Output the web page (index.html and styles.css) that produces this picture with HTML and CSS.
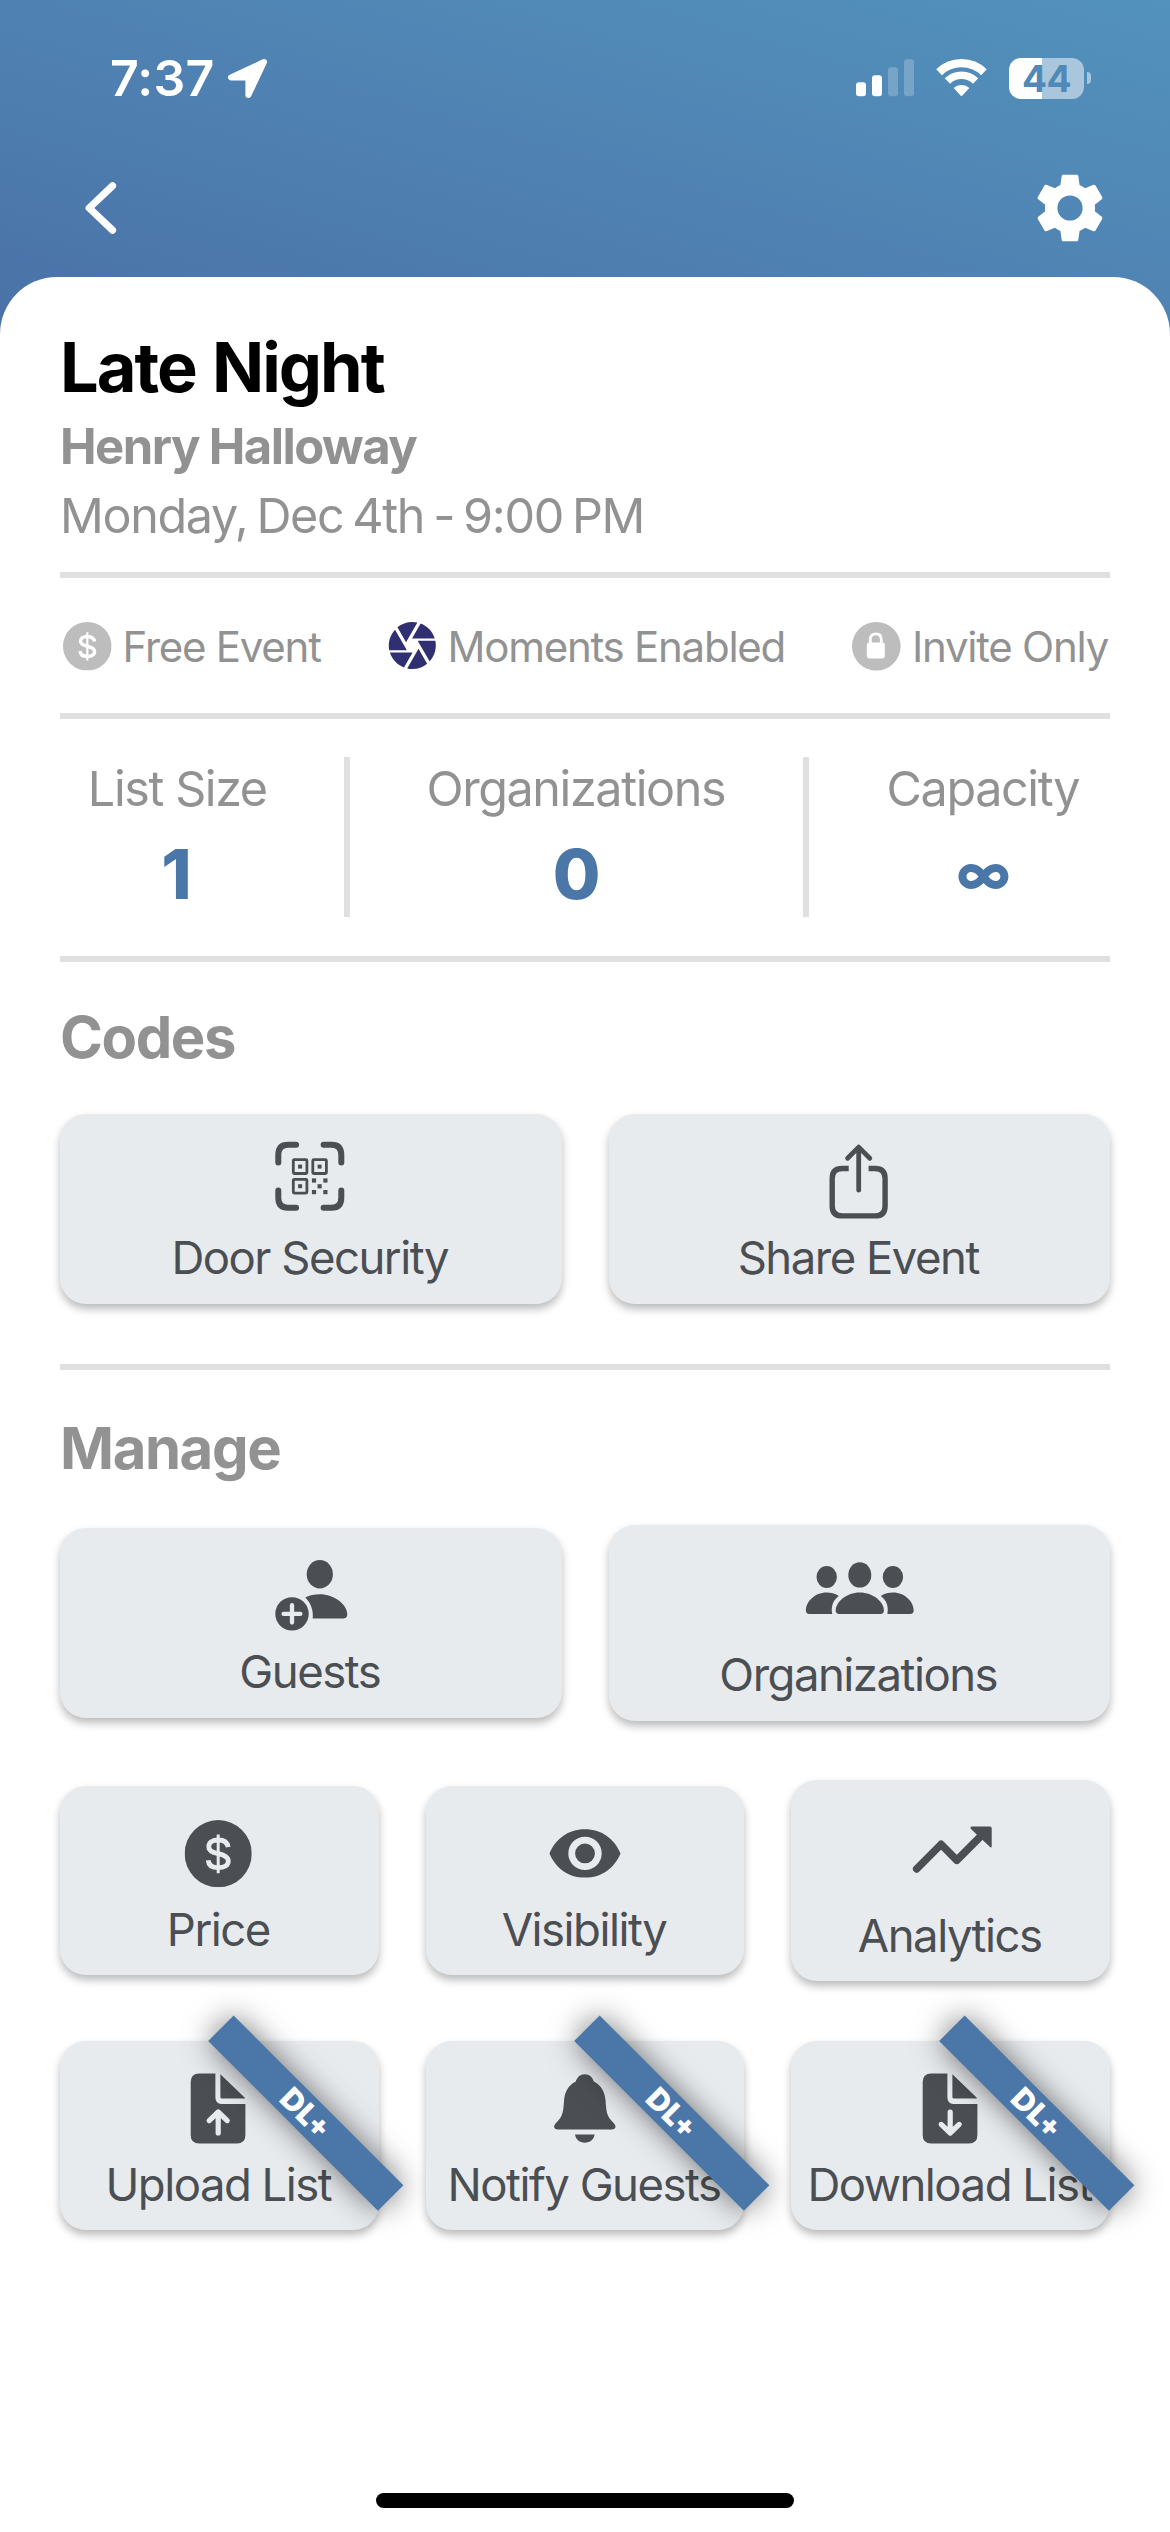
FILE: index.html
```html
<!DOCTYPE html>
<html lang="en">
<head>
<meta charset="utf-8">
<title>Late Night</title>
<link rel="stylesheet" href="styles.css">
</head>
<body>
<svg class="defs" width="0" height="0" aria-hidden="true">
  <symbol id="dollar" viewBox="20.6 16.1 67.2 67.2">
    <circle cx="54.2" cy="49.7" r="33.6" fill="currentColor"/>
    <path class="cut" stroke-width="4.8" d="M64.2 43.2C63.5 38.6 60 36 54.2 36C48.5 36 44.8 38.6 44.8 42.5C44.8 46.8 48.2 48.2 54.2 49.6C60.8 51.1 64.3 52.8 64.3 56.9C64.3 61.3 60.2 63.7 54.2 63.7C48.2 63.7 44.6 61 44.2 56.2"/>
    <path class="cut" stroke-width="3" d="M54.2 30.4V69.2"/>
  </symbol>
  <symbol id="page" viewBox="0 0 110 99">
    <path fill="currentColor" d="M51.4 14.5V38.3Q51.4 44.9 57.4 44.9H81.4V76Q81.4 84.5 72.9 84.5H35.2Q26.7 84.5 26.7 76V23Q26.7 14.5 35.2 14.5Z"/>
    <path fill="currentColor" d="M56.4 15.2L80.6 38.4Q81.6 39.6 80 39.6H58Q56.4 39.6 56.4 38Z"/>
  </symbol>
</svg>

<div class="screen">
  <header class="top">
    <div class="status">
      <div class="clock">
        <span>7:37</span>
        <svg width="39" height="39" viewBox="227 59 39 39"><path fill="#fff" stroke="#fff" stroke-width="6" stroke-linejoin="round" d="M263 62L230 77.5H247.4V95Z"/></svg>
      </div>
      <div class="indicators">
        <svg width="58" height="38" viewBox="0 0 58 38" fill="#fff">
          <rect x="0" y="23.3" width="10" height="14" rx="3"/>
          <rect x="16" y="16.3" width="10" height="21" rx="3"/>
          <rect x="32" y="8.3" width="10" height="29" rx="3" opacity=".22"/>
          <rect x="48" y="0.3" width="10" height="37" rx="3" opacity=".22"/>
        </svg>
        <svg width="51" height="38" viewBox="936 59 51 38" fill="none" stroke="#fff">
          <path stroke-width="8.2" d="M939.1 72.2A32.3 32.3 0 0 1 983.9 72.2"/>
          <path stroke-width="7.6" d="M947.4 81A20.2 20.2 0 0 1 975.6 81"/>
          <path fill="#fff" stroke="none" d="M953.7 88.1A11.2 11.2 0 0 1 969.3 88.1L962.7 95.2Q961.5 96.6 960.3 95.2Z"/>
        </svg>
        <div class="battery"><span class="level">44</span><span class="nub"></span></div>
      </div>
    </div>
    <nav class="bar">
      <svg width="32" height="52" viewBox="0 0 32 52"><path fill="none" stroke="#fff" stroke-width="7.2" stroke-linecap="round" stroke-linejoin="round" d="M27.5 3.8L4.2 26L27.5 48.2"/></svg>
      <svg width="80" height="80" viewBox="0 0 24 24"><path fill="#fff" d="M19.43 12.98c.04-.32.07-.64.07-.98s-.03-.66-.07-.98l2.11-1.65c.19-.15.24-.42.12-.64l-2-3.46c-.12-.22-.39-.3-.61-.22l-2.49 1c-.52-.4-1.08-.73-1.69-.98l-.38-2.65C14.46 2.18 14.25 2 14 2h-4c-.25 0-.46.18-.49.42l-.38 2.65c-.61.25-1.17.59-1.69.98l-2.49-1c-.23-.09-.49 0-.61.22l-2 3.46c-.13.22-.07.49.12.64l2.11 1.65c-.04.32-.07.65-.07.98s.03.66.07.98l-2.11 1.65c-.19.15-.24.42-.12.64l2 3.46c.12.22.39.3.61.22l2.49-1c.52.4 1.08.73 1.69.98l.38 2.65c.03.24.24.42.49.42h4c.25 0 .46-.18.49-.42l.38-2.65c.61-.25 1.17-.59 1.69-.98l2.49 1c.23.09.49 0 .61-.22l2-3.46c.12-.22.07-.49-.12-.64l-2.11-1.65zM12 15.78a3.78 3.78 0 1 1 0-7.56 3.78 3.78 0 0 1 0 7.56z"/></svg>
    </nav>
  </header>

  <main class="sheet">
    <h1 class="title">Late Night</h1>
    <p class="host">Henry Halloway</p>
    <p class="date">Monday, Dec 4th - 9:00 PM</p>
    <hr class="rule">

    <ul class="facts">
      <li class="fact">
        <svg class="fact-icon on-white" width="48.6" height="48.6"><use href="#dollar"/></svg>
        <span>Free Event</span>
      </li>
      <li class="fact">
        <svg class="fact-icon moments" width="48.6" height="48.6" viewBox="1.66 2 20.68 20.68" fill="currentColor"><path d="M9.4 10.5l4.77-8.26C13.47 2.09 12.75 2 12 2c-2.4 0-4.6.85-6.32 2.25l3.66 6.35.06-.1zM21.54 9c-.92-2.92-3.15-5.26-6-6.34L11.88 9h9.66zm.26 1h-7.49l.29.5 4.76 8.25C21 16.97 22 14.61 22 12c0-.69-.07-1.35-.2-2zM8.54 12l-3.9-6.75C3.01 7.03 2 9.39 2 12c0 .69.07 1.35.2 2h7.49l-1.15-2zm-6.08 3c.92 2.92 3.15 5.26 6 6.34L12.12 15H2.46zm11.27 0l-3.9 6.76c.7.15 1.42.24 2.17.24 2.4 0 4.6-.85 6.32-2.25l-3.66-6.35-.93 1.6z"/></svg>
        <span>Moments Enabled</span>
      </li>
      <li class="fact">
        <svg class="fact-icon" width="48.6" height="48.6" viewBox="0 0 48.6 48.6">
          <circle cx="24.3" cy="24.3" r="24.3" fill="currentColor"/>
          <path fill="none" stroke="#fff" stroke-width="2.8" d="M18.3 22V17.6C18.3 13.8 20.6 11.9 23.8 11.9S29.3 13.8 29.3 17.6V22"/>
          <rect x="14.8" y="20.6" width="18" height="15.9" rx="2.4" fill="#fff"/>
        </svg>
        <span>Invite Only</span>
      </li>
    </ul>
    <hr class="rule">

    <dl class="stats">
      <div class="stat stat-list"><dt>List Size</dt><dd class="one">1</dd></div>
      <div class="divider"></div>
      <div class="stat stat-orgs"><dt>Organizations</dt><dd>0</dd></div>
      <div class="divider"></div>
      <div class="stat stat-cap"><dt>Capacity</dt><dd class="infinite">∞</dd></div>
    </dl>
    <hr class="rule">

    <h2 class="heading codes">Codes</h2>
    <div class="row">
      <button class="tile">
        <svg width="110" height="99" viewBox="0 0 110 99" fill="none" stroke="currentColor">
          <path stroke-width="6" stroke-linecap="round" d="M22.3 30.5V23Q22.3 12.8 32 12.8H40.1M67.6 12.8H75.6Q85.3 12.8 85.3 23V30.5M22.3 58.5V65.8Q22.3 75.8 32 75.8H40.1M67.6 75.8H75.6Q85.3 75.8 85.3 65.8V58.5"/>
          <g stroke-width="2.8">
            <rect x="37.3" y="27.7" width="13.6" height="13.8" rx="1"/>
            <rect x="56.8" y="27.7" width="13.6" height="13.8" rx="1"/>
            <rect x="37.3" y="47.3" width="13.6" height="13.8" rx="1"/>
          </g>
          <g fill="currentColor" stroke="none">
            <rect x="42.1" y="32.6" width="4" height="4"/><rect x="61.6" y="32.6" width="4" height="4"/><rect x="42.1" y="52.2" width="4" height="4"/>
            <rect x="55.9" y="46.4" width="4.2" height="4.2"/><rect x="67.3" y="46.4" width="4.2" height="4.2"/><rect x="61.5" y="52.2" width="4.2" height="4.2"/><rect x="55.9" y="58" width="4.2" height="4.2"/><rect x="67.3" y="58" width="4.2" height="4.2"/>
          </g>
        </svg>
        <span>Door Security</span>
      </button>
      <button class="tile">
        <svg width="110" height="99" viewBox="0 0 110 99" fill="none" stroke="currentColor">
          <path stroke-width="5.4" d="M44.7 36.5H38.2Q28.2 36.5 28.2 46.5V73.9Q28.2 83.9 38.2 83.9H71.1Q81.1 83.9 81.1 73.9V46.5Q81.1 36.5 71.1 36.5H64.6"/>
          <path stroke-width="4.8" stroke-linecap="round" stroke-linejoin="round" d="M54.7 58.2V15.4M43.6 26.2L54.7 15.1L65.8 26.2"/>
        </svg>
        <span>Share Event</span>
      </button>
    </div>
    <hr class="rule manage-rule">

    <h2 class="heading manage">Manage</h2>
    <div class="rows">
      <div class="row">
        <button class="tile">
          <svg width="110" height="99" viewBox="0 0 110 99" fill="currentColor">
            <ellipse cx="63.8" cy="28.3" rx="13.1" ry="14.2"/>
            <path d="M49.3 51.4C53.5 49.2 58.5 48.2 63.8 48.2C78 48.2 91.3 58.5 91.3 68.3C91.3 71.2 89.7 72.6 87 72.6H56.7C57.6 64.5 55 57 49.3 51.4Z"/>
            <circle cx="36" cy="67.9" r="16.7"/>
            <path class="cut" stroke-width="4.3" stroke-linecap="round" d="M27.6 67.9H44.4M36 59.2V76.6"/>
          </svg>
          <span>Guests</span>
        </button>
        <button class="tile">
          <svg width="110" height="105" viewBox="0 0 110 105" fill="currentColor">
            <ellipse cx="22.7" cy="34" rx="10.2" ry="10.9"/>
            <ellipse cx="55.8" cy="31.9" rx="11.5" ry="12.7"/>
            <ellipse cx="88.9" cy="34" rx="10.2" ry="10.9"/>
            <path d="M31.7 67.5C31.7 59 42.5 49.5 55.8 49.5S79.9 59 79.9 67.5Q79.9 70.9 76.5 70.9H35.1Q31.7 70.9 31.7 67.5Z"/>
            <path d="M34.8 52.9C30.8 50.4 27.2 49.5 22.5 49.5C11 49.5 1.9 58.5 1.9 67.5Q1.9 70.9 5.3 70.9H28.3C26.6 63.5 29.2 57 34.8 52.9Z"/>
            <path d="M76.8 52.9C80.8 50.4 84.4 49.5 89.1 49.5C100.6 49.5 109.7 58.5 109.7 67.5Q109.7 70.9 106.3 70.9H83.3C85 63.5 82.4 57 76.8 52.9Z"/>
          </svg>
          <span>Organizations</span>
        </button>
      </div>
      <div class="row">
        <button class="tile">
          <svg width="110" height="99" viewBox="0 0 110 99"><use href="#dollar" x="20.6" y="16.1" width="67.2" height="67.2"/></svg>
          <span>Price</span>
        </button>
        <button class="tile">
          <svg width="110" height="99" viewBox="0 0 110 99" fill="currentColor">
            <path fill-rule="evenodd" d="M19.5 49.4C25.5 35 38 25.2 55 25.2S84.5 35 90.5 49.4C84.5 63.8 72 73.6 55 73.6S25.5 63.8 19.5 49.4ZM71.7 49.4A16.7 16.7 0 1 0 38.3 49.4A16.7 16.7 0 1 0 71.7 49.4Z"/>
            <circle cx="55" cy="49.4" r="9.9"/>
          </svg>
          <span>Visibility</span>
        </button>
        <button class="tile">
          <svg width="110" height="111" viewBox="0 0 110 111">
            <path fill="none" stroke="currentColor" stroke-width="7.6" stroke-linecap="round" stroke-linejoin="round" d="M20.7 70.9L45.1 46.4L60.8 62.2L88 35"/>
            <path fill="currentColor" d="M76 28.5H94Q95.7 28.5 95.7 30.2V48Q95.7 50.6 93.8 48.8L75.2 31.2Q73.4 28.8 76 28.5Z"/>
          </svg>
          <span>Analytics</span>
        </button>
      </div>
      <div class="row">
        <button class="tile">
          <svg width="110" height="99" viewBox="0 0 110 99">
            <use href="#page"/>
            <path class="cut" stroke-width="5.2" stroke-linecap="round" stroke-linejoin="round" d="M54.2 73.9V54M45.2 61.6L54.2 53L63.2 61.6"/>
          </svg>
          <span>Upload List</span>
          <b class="ribbon">DL+</b>
        </button>
        <button class="tile">
          <svg width="110" height="99" viewBox="0 0 110 99" fill="currentColor">
            <path d="M54.8 15.2C59.5 15.2 62.6 18.4 63.8 22.6C71.5 26.3 75 33.5 75.6 42C76.2 52 77 56.5 80.5 60.5C83.8 64.2 85.5 65.7 85.5 67.6Q85.5 70.6 81.5 70.6H28.1Q24.1 70.6 24.1 67.6C24.1 65.7 25.8 64.2 29.1 60.5C32.6 56.5 33.4 52 34 42C34.6 33.5 38.1 26.3 45.8 22.6C47 18.4 50.1 15.2 54.8 15.2Z"/>
            <path d="M45 75.5H64.6C63.9 80.5 60 83.7 54.8 83.7S45.7 80.5 45 75.5Z"/>
          </svg>
          <span>Notify Guests</span>
          <b class="ribbon">DL+</b>
        </button>
        <button class="tile">
          <svg width="110" height="99" viewBox="0 0 110 99">
            <use href="#page"/>
            <path class="cut" stroke-width="5.2" stroke-linecap="round" stroke-linejoin="round" d="M54.2 53.2V73M45.2 65.4L54.2 74L63.2 65.4"/>
          </svg>
          <span>Download List</span>
          <b class="ribbon">DL+</b>
        </button>
      </div>
    </div>
    <div class="home"></div>
  </main>
</div>
</body>
</html>
```
FILE: styles.css
```css
* { box-sizing: border-box; margin: 0; padding: 0; }

body {
  --cut: #e8ebee;
  font-family: Inter, "Liberation Sans", sans-serif;
  color: #929292;
  background: #fff;
}

svg { display: block; flex: none; overflow: visible; }
.defs { position: absolute; }

.screen {
  width: 1170px;
  height: 2532px;
  display: flex;
  flex-direction: column;
  overflow: hidden;
  background: #fff linear-gradient(to top right, #4a71a7, #4f82b2 50%, #5392bd) no-repeat 0 0 / 100% 336px;
}

/* header */
.top { height: 277px; }
.status {
  height: 156px;
  padding: 0 79px 0 110px;
  display: flex;
  justify-content: space-between;
  align-items: center;
}
.clock {
  display: flex;
  align-items: center;
  gap: 13px;
  color: #fff;
  font-size: 50px;
  font-weight: 560;
  letter-spacing: .2px;
}
.indicators { display: flex; align-items: center; gap: 22px; }
.battery { display: flex; align-items: center; gap: 3px; }
.level {
  width: 75px;
  height: 41px;
  border-radius: 12px;
  background: linear-gradient(to right, #fff 33px, rgba(255, 255, 255, .5) 33px);
  color: #5088b7;
  font-size: 37px;
  font-weight: 700;
  line-height: 41px;
  text-align: center;
  letter-spacing: -.4px;
}
.nub { width: 4px; height: 12px; border-radius: 0 4px 4px 0; background: rgba(255, 255, 255, .5); }
.bar {
  height: 104px;
  padding: 0 60px 0 85px;
  display: flex;
  justify-content: space-between;
  align-items: center;
}

/* sheet */
.sheet {
  flex: 1;
  padding: 57px 60px 24px;
  border-radius: 57px 57px 0 0;
  background: #fff;
  display: flex;
  flex-direction: column;
}
.title {
  color: #000;
  font-size: 68.5px;
  line-height: 68px;
  font-weight: 740;
  letter-spacing: -2px;
  word-spacing: 2px;
}
.host {
  margin-top: 17px;
  font-size: 49px;
  line-height: 56px;
  font-weight: 670;
  letter-spacing: -1.5px;
  word-spacing: -.5px;
}
.date {
  margin-top: 13px;
  font-size: 48.5px;
  line-height: 56px;
  font-weight: 420;
  letter-spacing: -1.35px;
  word-spacing: -3.3px;
}
.rule { flex: none; height: 6px; border: 0; background: #e0e0e0; }
.date + .rule { margin-top: 28px; }

.facts {
  height: 135px;
  padding: 2px 2px 0 3px;
  display: flex;
  justify-content: space-between;
  align-items: center;
  list-style: none;
}
.fact {
  display: flex;
  align-items: center;
  gap: 11px;
  font-size: 42px;
  line-height: 50px;
  font-weight: 430;
  letter-spacing: -1.25px;
}
.fact-icon { color: #bdbdbd; }
.moments { color: #2f2f72; }

.stats {
  height: 237px;
  padding: 38px 0 39px;
  display: flex;
  justify-content: space-between;
}
.stat { display: flex; flex-direction: column; align-items: center; gap: 15px; padding-top: 2px; }
.stat-list { width: 236px; }
.stat-orgs { width: 357px; }
.stat-cap { width: 253px; }
.stat dt {
  font-size: 48.5px;
  line-height: 60px;
  font-weight: 430;
  letter-spacing: -1.4px;
  text-indent: -1.4px;
}
.stat dd { color: #4a76a8; font-size: 69px; line-height: 80px; font-weight: 800; }
.stat .one { text-indent: -3px; }
.stat .infinite { font-size: 54px; }
.divider { width: 6px; background: #e0e0e0; }

.heading { font-size: 58px; line-height: 64px; font-weight: 710; letter-spacing: -1.4px; }
.codes { margin: 43px 0 45px; }
.manage-rule { margin-top: 60.5px; }
.manage { margin: 46px 0 45px; }

/* tiles */
.rows { display: flex; flex-direction: column; gap: 59.3px; }
.row { display: flex; align-items: center; gap: 47px; }
.tile {
  position: relative;
  flex: 1 1 0;
  min-width: 0;
  padding: 18px 0 18.5px;
  display: flex;
  flex-direction: column;
  align-items: center;
  border: 0;
  border-radius: 26px;
  background: #e8ebee;
  box-shadow: 0 5px 9px rgba(0, 0, 0, .27);
  color: #4b4f53;
  font-family: inherit;
  font-size: 45.5px;
  font-weight: 440;
  line-height: 54px;
  letter-spacing: -1.5px;
  text-indent: -2px;
  white-space: nowrap;
}
.cut { fill: none; stroke: var(--cut); }
.on-white { --cut: #fff; }

.ribbon {
  position: absolute;
  left: 126px;
  top: 54.5px;
  width: 239.5px;
  height: 35.6px;
  transform: rotate(45deg);
  background: #4a76a8;
  box-shadow: 0 0 30px rgba(0, 0, 0, .55);
  color: #fff;
  font-family: Lato, sans-serif;
  font-size: 28px;
  line-height: 35px;
  font-weight: 900;
  letter-spacing: 1.5px;
  -webkit-text-stroke: 1.5px #fff;
  text-indent: 0;
  text-align: center;
}

.home {
  width: 418px;
  height: 15px;
  margin: auto auto 0;
  border-radius: 8px;
  background: #000;
}
```
